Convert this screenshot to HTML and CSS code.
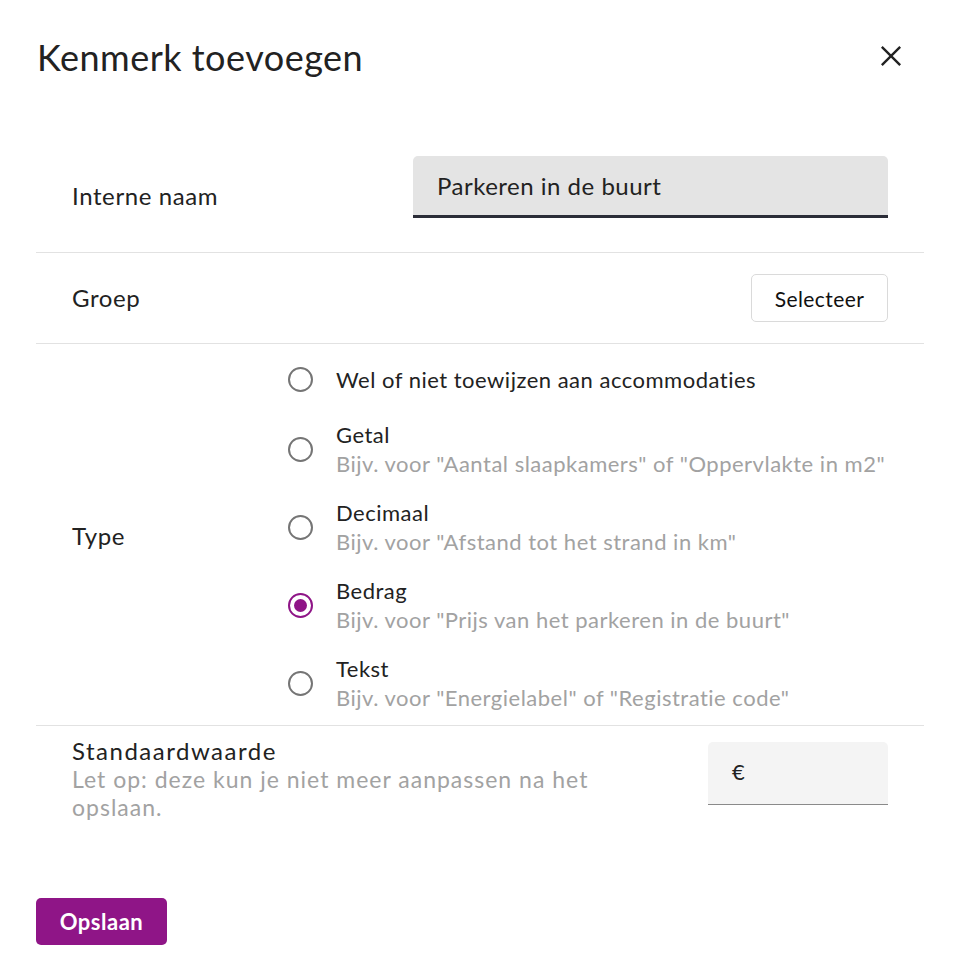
FILE: index.html
```html
<!DOCTYPE html>
<html lang="nl">
<head>
<meta charset="utf-8">
<title>Kenmerk toevoegen</title>
<link rel="stylesheet" href="styles.css">
</head>
<body>
<div class="dialog">
  <header class="header">
    <h1 class="title">Kenmerk toevoegen</h1>
    <button class="close" aria-label="Sluiten">
      <svg viewBox="0 0 24 24" width="24" height="24"><path d="M2 2 L22 22 M22 2 L2 22" stroke="#222" stroke-width="2.6" fill="none" stroke-linecap="butt"/></svg>
    </button>
  </header>

  <div class="row row-name">
    <div class="label">Interne naam</div>
    <div class="field">Parkeren in de buurt</div>
  </div>

  <div class="row row-group">
    <div class="label">Groep</div>
    <button class="btn-outline">Selecteer</button>
  </div>

  <div class="row row-type">
    <div class="label type-label">Type</div>
    <div class="radios">
      <div class="option">
        <span class="radio"><span class="ring"></span></span>
        <div class="opt-text"><div class="opt-label">Wel of niet toewijzen aan accommodaties</div></div>
      </div>
      <div class="option">
        <span class="radio"><span class="ring"></span></span>
        <div class="opt-text"><div class="opt-label">Getal</div><div class="opt-desc">Bijv. voor "Aantal slaapkamers" of "Oppervlakte in m2"</div></div>
      </div>
      <div class="option">
        <span class="radio"><span class="ring"></span></span>
        <div class="opt-text"><div class="opt-label">Decimaal</div><div class="opt-desc">Bijv. voor "Afstand tot het strand in km"</div></div>
      </div>
      <div class="option">
        <span class="radio checked"><span class="ring"><span class="dot"></span></span></span>
        <div class="opt-text"><div class="opt-label">Bedrag</div><div class="opt-desc">Bijv. voor "Prijs van het parkeren in de buurt"</div></div>
      </div>
      <div class="option">
        <span class="radio"><span class="ring"></span></span>
        <div class="opt-text"><div class="opt-label">Tekst</div><div class="opt-desc">Bijv. voor "Energielabel" of "Registratie code"</div></div>
      </div>
    </div>
  </div>

  <div class="row row-default">
    <div class="default-text">
      <div class="label label-default">Standaardwaarde</div>
      <div class="note">Let op: deze kun je niet meer aanpassen na het opslaan.</div>
    </div>
    <div class="field-small">€</div>
  </div>

  <div class="footer">
    <button class="btn-primary">Opslaan</button>
  </div>
</div>
</body>
</html>
```

FILE: styles.css
```css
* { box-sizing: border-box; }
html, body { margin: 0; padding: 0; background: #fff; }
body {
  font-family: Lato, "Noto Sans", sans-serif;
  color: #222;
  width: 959px;
  height: 980px;
  overflow: hidden;
}
.dialog {
  padding: 0 35px 0 36px;
}
.header {
  display: flex;
  justify-content: space-between;
  align-items: flex-start;
  height: 140px;
  padding-top: 36px;
}
.title {
  margin: 0 0 0 1px;
  font-weight: 400;
  font-size: 36px;
  line-height: 42px;
  letter-spacing: 0.5px;
  color: #222;
}
.close {
  border: 0;
  background: none;
  padding: 0;
  margin: 8px 20px 0 0;
  width: 24px;
  height: 24px;
  cursor: pointer;
}
.close svg { display: block; width: 22px; height: 22px; }
.row {
  display: flex;
  align-items: center;
  justify-content: space-between;
  padding: 0 36px;
  border-bottom: 1px solid #e2e2e2;
}
.label {
  font-size: 24px;
  line-height: 28px;
  letter-spacing: 0.6px;
  color: #222;
}
.row-name {
  height: 113px;
}
.field {
  align-self: flex-start;
  margin-top: 16px;
  width: 475px;
  height: 62px;
  background: #e4e4e4;
  border-radius: 5px 5px 0 0;
  border-bottom: 3px solid #2b2d38;
  padding: 0 24px;
  font-size: 24px;
  line-height: 60px;
  letter-spacing: 0.5px;
  color: #222;
}
.row-group {
  height: 91px;
}
.btn-outline {
  font-family: inherit;
  width: 137px;
  height: 48px;
  background: #fff;
  border: 1px solid #dadada;
  border-radius: 5px;
  font-size: 21px;
  letter-spacing: 0.4px;
  color: #111;
  padding: 0;
}
.row-type {
  justify-content: flex-start;
  padding-top: 15px;
  padding-bottom: 13px;
}
.type-label {
  width: 208px;
  flex: none;
}
.radios {
  display: flex;
  flex-direction: column;
  gap: 20px;
}
.option {
  display: flex;
  align-items: center;
  gap: 15px;
  min-height: 41px;
}
.radio {
  flex: none;
  width: 41px;
  height: 41px;
  display: flex;
  align-items: center;
  justify-content: center;
}
.ring {
  width: 25px;
  height: 25px;
  border: 2.6px solid #757575;
  border-radius: 50%;
  display: flex;
  align-items: center;
  justify-content: center;
}
.checked .ring { border-color: #8f1587; }
.dot {
  width: 13px;
  height: 13px;
  border-radius: 50%;
  background: #8f1587;
}
.opt-label {
  font-size: 22px;
  line-height: 29px;
  letter-spacing: 0.5px;
  color: #222;
}
.opt-desc {
  font-size: 22px;
  line-height: 29px;
  letter-spacing: 0.5px;
  color: #a2a2a2;
}
.row-default {
  align-items: flex-start;
  border-bottom: 0;
  padding-top: 11px;
}
.default-text { width: 545px; }
.label-default { line-height: 27.5px; letter-spacing: 1.5px; }
.note {
  font-size: 23px;
  line-height: 28px;
  letter-spacing: 1px;
  color: #a2a2a2;
}
.field-small {
  margin-top: 5px;
  width: 180px;
  height: 63px;
  background: #f4f4f4;
  border-radius: 5px 5px 0 0;
  border-bottom: 1px solid #8a8a8a;
  padding: 0 24px;
  font-size: 22px;
  line-height: 60px;
  color: #222;
}
.footer {
  padding-top: 77px;
}
.btn-primary {
  font-family: inherit;
  width: 131px;
  height: 47px;
  border: 0;
  border-radius: 5px;
  background: #8f1587;
  color: #fff;
  font-weight: 700;
  font-size: 22px;
  letter-spacing: 0.5px;
  padding: 0;
}
```
